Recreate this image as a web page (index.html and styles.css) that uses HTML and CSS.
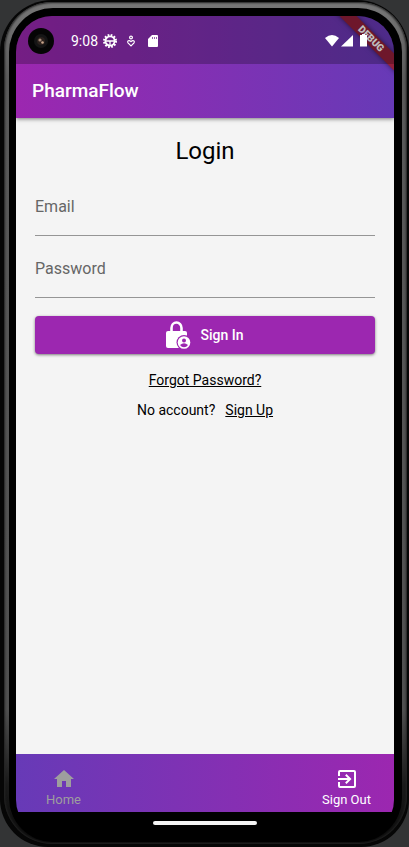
FILE: index.html
```html
<!DOCTYPE html>
<html lang="en">
<head>
<meta charset="utf-8">
<meta name="viewport" content="width=device-width, initial-scale=1">
<title>PharmaFlow</title>
<link rel="stylesheet" href="styles.css">
</head>
<body>
<div class="device">
  <div class="rim">
    <div class="bezel">
      <div class="screen">
        <header class="top">
          <div class="status">
            <svg class="camera" viewBox="0 0 26 26" aria-hidden="true">
              <circle cx="13" cy="13" r="13" fill="#050505"/>
              <circle cx="13" cy="13" r="7" fill="#151515"/>
              <circle cx="13" cy="13" r="4" fill="#2b211d"/>
              <circle cx="12" cy="12" r="1.6" fill="#a58a78"/>
              <circle cx="14.500" cy="14.500" r="1.300" fill="#c9a68c"/>
            </svg>
            <span class="clock">9:08</span>
            <svg class="sys gear" viewBox="0 0 14 14" aria-hidden="true" fill="none" stroke="#fff">
              <circle cx="7" cy="7" r="4.600" stroke-width="1.800"/>
              <circle cx="7" cy="7" r="6" stroke-width="2" stroke-dasharray="1.700 1.442"/>
              <path d="M2.500 7h9M7 7v5" stroke-width="1.300"/>
            </svg>
            <svg class="sys care" viewBox="0 0 10 12" aria-hidden="true" fill="none" stroke="#fff" stroke-width="1.200">
              <circle cx="5" cy="2.500" r="1.400"/>
              <path d="M5 10.800 2 7.800C.9 6 3 4.500 5 6.700 7 4.500 9.100 6 8 7.800z"/>
            </svg>
            <svg class="sys card" viewBox="0 0 10 12" aria-hidden="true"><path fill="#fff" d="M4 0h5q1 0 1 1v10q0 1-1 1H1q-1 0-1-1V4z"/><path stroke="#68208a" stroke-width=".7" d="M4.500 2v2M6.500 2v2M8.500 2v2"/></svg>
            <span class="grow"></span>
            <svg class="signals" viewBox="0 0 42 14" aria-hidden="true" fill="#fff">
              <path d="M0 4Q7-2 14 4L7 12.500z"/>
              <path d="M28 1v11.500H16z"/>
              <path d="M37 0h3v1h2v11.500h-7V1h2z"/>
            </svg>
          </div>
          <h1 class="brand">PharmaFlow</h1>
          <span class="debug">DEBUG</span>
        </header>
        <main class="content">
          <h2 class="title">Login</h2>
          <form class="form">
            <div class="field">
              <label for="email">Email</label>
              <input id="email" type="email">
            </div>
            <div class="field">
              <label for="password">Password</label>
              <input id="password" type="password">
            </div>
            <button class="submit" type="button">
              <svg class="lock" viewBox="0 0 26 28" aria-hidden="true">
                <path d="M5.500 12V7a5 5.500 0 0 1 10 0v5" fill="none" stroke="#fff" stroke-width="2.600"/>
                <rect x="0" y="10" width="21" height="17" rx="2" fill="#fff"/>
                <circle cx="18" cy="21.500" r="7.500" fill="#9c27b0"/>
                <circle cx="18" cy="21.500" r="6.300" fill="#fff"/>
                <circle cx="18" cy="19.500" r="2" fill="#9c27b0"/>
                <path d="M14 24q4-3.500 8 0-1.500 2.300-4 2.300t-4-2.300" fill="#9c27b0"/>
              </svg>
              Sign In
            </button>
          </form>
          <p class="line"><a href="#forgot">Forgot Password?</a></p>
          <p class="line"><span>No account?</span><a href="#signup">Sign Up</a></p>
        </main>
        <nav class="tabs">
          <a class="tab muted" href="#home">
            <svg viewBox="0 0 24 24" aria-hidden="true"><path fill="currentColor" d="M10 20v-6h4v6h5v-8h3L12 3 2 12h3v8z"/></svg>
            Home
          </a>
          <a class="tab" href="#signout">
            <svg viewBox="0 0 24 24" aria-hidden="true"><path fill="currentColor" d="M10.090 15.590 11.500 17l5-5-5-5-1.410 1.410L12.670 11H3v2h9.670l-2.580 2.590zM19 3H5a2 2 0 0 0-2 2v4h2V5h14v14H5v-4H3v4a2 2 0 0 0 2 2h14a2 2 0 0 0 2-2V5a2 2 0 0 0-2-2z"/></svg>
            Sign Out
          </a>
        </nav>
        <div class="gesture"><span class="pill"></span></div>
      </div>
    </div>
  </div>
</div>
</body>
</html>
```
FILE: styles.css
```css
* {
  box-sizing: border-box;
}

body {
  margin: 0;
  min-height: 100vh;
  display: flex;
  background: #333435;
  color: #000;
  font-family: Roboto, "Liberation Sans", sans-serif;
  font-size: 14px;
}

h1, h2, p {
  margin: 0;
  font-weight: 400;
}

/* Phone shell */
.device {
  flex: 1;
  display: flex;
  padding: 2px 2px 3px 4px;
  border-radius: 52px 52px 48px 48px;
  background: #060606;
}

.rim {
  flex: 1;
  display: flex;
  padding: 6px 5px 2px;
  border-radius: 48px;
  background: linear-gradient(#777 0, #5a5a5a 80px, #505050 84%, #1a1a1a 93%, #0a0a0a);
  box-shadow: inset 0 0 2px 1px #222;
}

.bezel {
  flex: 1;
  display: flex;
  padding: 8px 8px 6px 7px;
  border-radius: 44px;
  background: #000;
}

.screen {
  flex: 1;
  display: flex;
  flex-direction: column;
  overflow: hidden;
  border-radius: 36px;
  background: #000;
}

/* Status bar and app bar */
.top {
  position: relative;
  background: linear-gradient(90deg, #9c27b0, #673ab7);
  box-shadow: 0 1px 4px rgba(0, 0, 0, 0.5);
}

.status {
  position: relative;
  z-index: 2;
  display: flex;
  align-items: center;
  height: 48px;
  padding: 2px 27px 0 12px;
  background: rgba(0, 0, 0, 0.25);
  color: #fff;
}

.camera {
  width: 26px;
  height: 26px;
}

.clock {
  margin: 0 5px 0 17px;
}

.sys {
  height: 12px;
}

.gear {
  width: 14px;
  height: 14px;
}

.care {
  width: 10px;
  margin: 0 12px 0 9px;
}

.card {
  width: 10px;
}

.grow {
  flex: 1;
}

.signals {
  width: 42px;
  height: 14px;
}

.brand {
  padding: 0 16px;
  color: #fff;
  font-size: 19px;
  font-weight: 500;
  line-height: 54px;
}

.debug {
  position: absolute;
  z-index: 1;
  top: 17px;
  right: -27px;
  width: 100px;
  background: #931f3a;
  box-shadow: 0 0 5px rgba(0, 0, 0, 0.5);
  color: #fff;
  font-size: 10px;
  font-weight: 900;
  line-height: 12px;
  text-align: center;
  transform: rotate(45deg);
}

/* Login form */
.content {
  flex: 1;
  padding: 17px 19px;
  background: #f4f4f4;
}

.top {
  z-index: 1;
}

.title {
  font-size: 24px;
  line-height: 32px;
  text-align: center;
}

.form {
  display: grid;
  padding: 7px 0 11px;
}

.field {
  display: grid;
  height: 62px;
  border-bottom: 1px solid #959595;
}

.field label,
.field input {
  grid-area: 1 / 1;
  width: 100%;
  font: inherit;
  font-size: 16px;
}

.field label {
  align-self: center;
  padding-top: 4px;
  color: #666;
}

.field input {
  border: 0;
  padding: 0;
  background: transparent;
  outline: 0;
}

.submit {
  display: flex;
  align-items: center;
  justify-content: center;
  gap: 8px;
  height: 38px;
  margin-top: 18px;
  border: 0;
  border-radius: 4px;
  background: #9c27b0;
  box-shadow: 0 1px 3px rgba(0, 0, 0, 0.5);
  color: #fff;
  font: inherit;
  font-weight: 500;
}

.lock {
  width: 26px;
  height: 28px;
}

.line {
  display: flex;
  justify-content: center;
  gap: 10px;
  line-height: 30px;
}

.line a {
  color: inherit;
  text-underline-offset: 1px;
}

/* Bottom navigation */
.tabs {
  display: flex;
  justify-content: space-between;
  height: 58px;
  padding-top: 13px;
  background: linear-gradient(90deg, #673ab7, #9c27b0);
}

.tab {
  display: flex;
  flex-direction: column;
  align-items: center;
  gap: 1px;
  width: 95px;
  color: #fff;
  font-size: 13px;
  line-height: 16px;
  text-decoration: none;
}

.tab svg {
  width: 24px;
  height: 24px;
}

.muted {
  color: #9e9e9e;
}

.gesture {
  display: flex;
  justify-content: center;
  height: 24px;
  padding-top: 9px;
  background: #000;
}

.pill {
  width: 104px;
  height: 4px;
  border-radius: 2px;
  background: #f4f4f4;
}
```
